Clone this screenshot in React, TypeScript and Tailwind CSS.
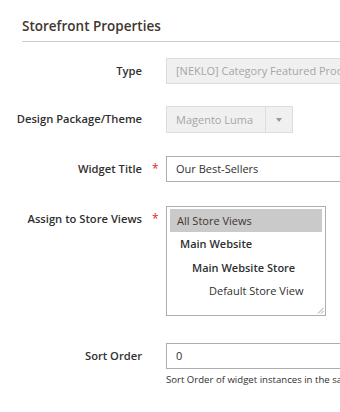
import React from 'react';

function Row({ label, required, className, children }: { label: string; required?: boolean; className?: string; children: React.ReactNode }) {
  return (
    <div className={`flex items-start ${className ?? ''}`}>
      <div className="w-[142px] shrink-0 text-right text-[11.2px] font-semibold text-[#303030] leading-[26px]">{label}</div>
      <div className="w-[24px] shrink-0 leading-[26px] text-[#e22626] text-[12px] pl-[10px]">{required ? '*' : ''}</div>
      <div className="flex-1 min-w-0">{children}</div>
    </div>
  );
}

export default function App() {
  return (
    <div className="w-[340px] h-[412px] bg-white overflow-hidden" style={{ fontFamily: '"Open Sans", sans-serif' }}>
      {/* Section title */}
      <div className="pl-[22px] pt-[14px]">
        <h2 className="text-[13.5px] font-semibold text-[#41362f] leading-[24px]">Storefront Properties</h2>
        <div className="mt-[3px] h-px bg-[#cccccc]"></div>
      </div>

      <div className="mt-[16px]">
        <Row label="Type">
          <div className="h-[26px] w-[260px] border border-[#dddddd] bg-[#f0f0f0] pl-[9px] text-[11px] leading-[24px] text-[#a6a6a6] whitespace-nowrap overflow-hidden">
            [NEKLO] Category Featured Products
          </div>
        </Row>

        <Row label="Design Package/Theme" className="mt-[22px]">
          <div className="h-[27px] w-[127px] border border-[#dddddd] bg-[#f0f0f0] flex">
            <div className="flex-1 pl-[9px] text-[11px] leading-[25px] text-[#a6a6a6] whitespace-nowrap">Magento Luma</div>
            <div className="w-[27px] border-l border-[#dddddd] flex items-center justify-center">
              <svg width="6" height="4" viewBox="0 0 6 4"><path d="M0 0h6L3 4z" fill="#9a9a9a" /></svg>
            </div>
          </div>
        </Row>

        <Row label="Widget Title" required className="mt-[23px]">
          <div className="h-[26px] w-[260px] border border-[#adadad] bg-white pl-[9px] text-[11px] leading-[24px] text-[#303030] whitespace-nowrap">
            Our Best-Sellers
          </div>
        </Row>

        <Row label="Assign to Store Views" required className="mt-[24px]">
          <div className="relative h-[110px] w-[160px] border border-[#adadad] bg-white px-[3px] pt-[2px] text-[11px] text-[#303030]">
            <div className="h-[23px] bg-[#cacaca] pl-[7px] leading-[23px] text-[#41362f]">All Store Views</div>
            <div className="h-[24px] pl-[10px] leading-[24px] font-semibold">Main Website</div>
            <div className="h-[24px] pl-[22px] leading-[24px] font-semibold">Main Website Store</div>
            <div className="h-[21px] pl-[39px] leading-[21px]">Default Store View</div>
            <svg className="absolute right-[1px] bottom-[1px]" width="7" height="7" viewBox="0 0 7 7">
              <path d="M6.5 1L1 6.5M6.5 4L4 6.5" stroke="#888" strokeWidth="0.8" />
            </svg>
          </div>
        </Row>

        <Row label="Sort Order" className="mt-[27px]">
          <div className="h-[26px] w-[260px] border border-[#adadad] bg-white pl-[9px] text-[11px] leading-[24px] text-[#303030]">0</div>
          <div className="mt-[4px] text-[9.6px] leading-[14px] text-[#303030] whitespace-nowrap">
            Sort Order of widget instances in the same container
          </div>
        </Row>
      </div>
    </div>
  );
}
